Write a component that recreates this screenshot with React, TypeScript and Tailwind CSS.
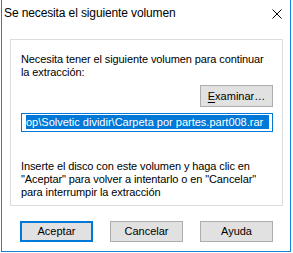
import React from "react";

export default function App() {
  return (
    <div className="w-[293px] h-[253px] bg-white pl-[1px] pr-[2px] pb-[1px] font-['Liberation_Sans',Arial,sans-serif] text-black">
      <div className="h-full flex flex-col border-l border-r border-b border-[#1883d7] bg-white">
        {/* Title bar */}
        <div className="h-[31px] shrink-0 flex justify-between">
          <div className="pl-[2px] pt-[5px] text-[12px] leading-[16px] tracking-[-0.12px] whitespace-nowrap">
            Se necesita el siguiente volumen
          </div>
          <div className="pt-[9px] pr-[8px]">
            <svg width="10" height="10" viewBox="0 0 10 10" className="block">
              <path d="M0.5 0.5 L9.5 9.5 M9.5 0.5 L0.5 9.5" stroke="#000" strokeWidth="1" fill="none" />
            </svg>
          </div>
        </div>

        {/* Body */}
        <div className="flex-1 flex flex-col pl-[8px] pr-[7px] pt-[8px] text-[11px] leading-[13px]">
          <div className="flex flex-col border border-[#dcdcdc] pl-[10px] pr-[9px] pt-[13px] pb-[6px]">
            <p className="whitespace-nowrap tracking-[-0.1px]">
              Necesita tener el siguiente volumen para continuar
              <br />
              la extracción:
            </p>
            <button className="mt-[6px] self-end w-[73px] h-[22px] bg-[#e1e1e1] border border-[#adadad] flex items-center justify-center leading-[13px]">
              <span>
                <span className="underline underline-offset-[2px]">E</span>xaminar…
              </span>
            </button>
            <div className="mt-[6px] h-[19px] border border-[#0078d7] bg-white pl-[4px] pr-[3px] pt-[1px]">
              <div className="h-[14px] bg-[#0078d7] text-white overflow-hidden whitespace-nowrap leading-[14px]">
                op\Solvetic dividir\Carpeta por partes.part008.rar
              </div>
            </div>
            <p className="mt-[28px] whitespace-nowrap tracking-[-0.1px]">
              Inserte el disco con este volumen y haga clic en
              <br />
              "Aceptar" para volver a intentarlo o en "Cancelar"
              <br />
              para interrumpir la extracción
            </p>
          </div>

          <div className="mt-[15px] ml-[10px] flex gap-[17px]">
            <button className="w-[73px] h-[21px] bg-[#e1e1e1] border-2 border-[#0078d7] flex items-center justify-center">
              Aceptar
            </button>
            <button className="w-[73px] h-[21px] bg-[#e1e1e1] border border-[#adadad] flex items-center justify-center">
              Cancelar
            </button>
            <button className="w-[73px] h-[21px] bg-[#e1e1e1] border border-[#adadad] flex items-center justify-center">
              Ayuda
            </button>
          </div>
        </div>
      </div>
    </div>
  );
}
